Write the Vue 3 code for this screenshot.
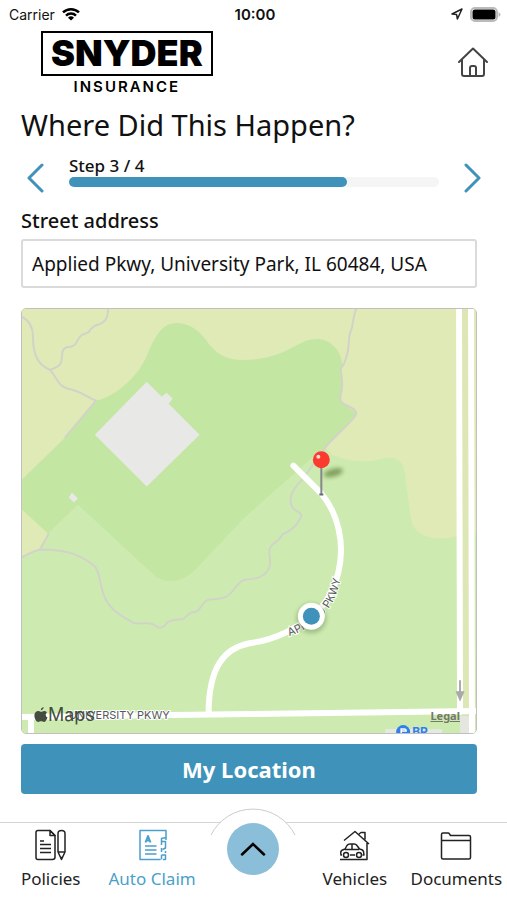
<template>
  <div class="app">
    <header class="status_bar">
      <div class="status_left">
        <span>Carrier</span>
        <svg class="wifi" viewBox="0 0 18 14" aria-hidden="true">
          <path d="M1 5.4a11.6 11.6 0 0 1 16 0" />
          <path d="M4 8.6a7.2 7.2 0 0 1 10 0" />
          <path class="wifi_dot" d="M9 13.6 6 10.8a4.3 4.3 0 0 1 6 0z" />
        </svg>
      </div>
      <time class="status_time">10:00</time>
      <div class="status_right">
        <svg class="locate" viewBox="0 0 12 12" aria-hidden="true">
          <path d="M1 6 11 1 6.4 11 5.6 6.6z" />
        </svg>
        <svg class="battery" viewBox="0 0 31 15" aria-hidden="true">
          <rect class="battery_case" x="1" y="1" width="26" height="13" rx="4" />
          <rect x="2.5" y="2.5" width="23" height="10" rx="2.5" />
          <path class="battery_tip" d="M28.5 5q2 1 2 2.5t-2 2.5z" />
        </svg>
      </div>
    </header>

    <div class="brand">
      <div class="logo">
        <div class="logo_name">SNYDER</div>
        <div class="logo_sub">INSURANCE</div>
      </div>
      <button class="home" aria-label="Home">
        <svg viewBox="0 0 30 30">
          <path d="M1 15 15 1.5 29 15" />
          <path d="M4 13v14q0 2 2 2h18q2 0 2-2V13" />
          <path d="M12 29v-8q0-2 2-2h2q2 0 2 2v8" />
        </svg>
      </button>
    </div>

    <main class="content">
      <h1>Where Did This Happen?</h1>

      <div class="stepper">
        <button class="arrow" aria-label="Previous step" @click="move_step(-1)">
          <svg viewBox="0 0 18 30"><path d="M16 2 3 15 16 28" /></svg>
        </button>
        <div class="step">
          <span>Step {{ step }} / {{ total }}</span>
          <div class="step_track">
            <div class="step_fill" :style="{ width: step_width }"></div>
          </div>
        </div>
        <button class="arrow" aria-label="Next step" @click="move_step(1)">
          <svg viewBox="0 0 18 30"><path d="M2 2 15 15 2 28" /></svg>
        </button>
      </div>

      <label class="field_label" for="address">Street address</label>
      <input id="address" v-model="address" class="field" type="text" />

      <div class="map">
        <svg class="map_canvas" viewBox="0 0 455 425">
          <defs>
            <filter id="soft" x="-50%" y="-50%" width="200%" height="200%">
              <feGaussianBlur stdDeviation="2" />
            </filter>
            <path
              id="pkwy_label"
              d="M268 328C282 323 297 314 306 302C315 290 319 277 322 255"
            />
          </defs>
          <rect width="455" height="425" fill="#cdebb0" />
          <!-- fields -->
          <path
            fill="#e0eab6"
            d="M0 0H455V226Q440 226 430 229Q412 232 401 226Q392 221 390 212L384 168Q383 152 374 150Q366 148 357 151Q335 156 311 146L304 139L150 100L0 171z"
          />
          <path fill="#e0eab6" d="M0 201 26 224 18 241 0 250z" />
          <!-- grove -->
          <path
            fill="#c3e6a3"
            d="M0 171 43 129 74 92C92 88 115 70 125 47C133 28 140 14 155 14C170 14 180 24 188 36C197 46 205 51 221 51C240 51 254 47 268 40C280 34 285 30 296 30C308 30 319 40 321 54L319 92 335 105 304 139 294 146 221 211 175 260C162 273 148 276 135 269L56 196 26 225 0 201z"
          />
          <!-- trails -->
          <g class="trail">
            <path d="M0 8C8 12 11 18 11 28C11 46 16 56 28 61C36 70 36 77 46 80C59 82 64 88 74 92L43 129" />
            <path d="M86 0Q87 12 78 15Q70 17 67 23Q64 25 60 26C54 30 56 38 47 38Q40 38 40 47C40 57 36 58 28 61" />
            <path
              d="M335 0C332 6 332 15 330 21C326 28 329 38 325 48Q323 56 319 60C321 68 322 78 319 88C317 98 334 96 335 105C332 113 312 128 304 139L281 171C271 180 267 188 270 197C272 204 281 202 280 208C275 218 270 222 261 226C258 233 250 234 248 241C247 250 251 253 247 261C243 268 236 271 224 271C214 273 213 286 203 289C196 292 190 290 185 292C178 296 180 304 171 304C166 304 165 311 159 311C153 312 149 311 145 315C140 321 137 320 133 317C128 313 122 316 113 315C108 313 105 310 99 307C88 300 82 290 80 280C77 269 77 261 72 257C58 246 45 241 18 241Q10 243 0 249"
            />
            <path d="M27 225 18 241" />
          </g>
          <!-- buildings -->
          <path fill="#e8e8e7" d="M125 73 140 88 145 84 151 90 147 95 178 126 125 178 73 126z" />
          <path fill="#e8e8e7" d="M50 184 56 190 52 194 47 189z" />
          <!-- roads -->
          <rect x="441" width="7" height="404" fill="#dde6b5" />
          <g class="road">
            <path d="M438 0 439 404" />
            <path d="M450 0 451 425" />
            <path d="M0 409 228 406 455 403" />
            <path d="M9 411V425" />
            <path d="M272 157 300 185C317 205 324 236 317 264C311 287 302 299 290 308C270 324 250 332 228 335C203 340 187 358 187 406" />
          </g>
          <rect x="439" y="408" width="9" height="17" fill="#e4e6df" />
          <path class="one_way" d="M439 372V386M436 384 439 391 442 384z" />
          <text class="road_name"><textPath href="#pkwy_label">APPLIED PKWY</textPath></text>
          <text class="road_name" x="148" y="411" text-anchor="end">UNIVERSITY PKWY</text>
          <!-- gas station -->
          <rect x="364" y="421" width="57" height="4" fill="#e6e8e2" />
          <circle cx="382" cy="424" r="7" fill="#2f80ed" />
          <path d="M380 428V421H383Q385 421 385 423H380" fill="none" stroke="#fff" stroke-width="1.5" />
          <text class="poi" x="391" y="428">BP</text>
          <!-- dropped pin -->
          <ellipse cx="312" cy="164" rx="10" ry="4" fill="#50702c" opacity="0.6" filter="url(#soft)" transform="rotate(-15 312 164)" />
          <path d="M300 156V186" stroke="#85888a" stroke-width="2" />
          <path d="M298 186H302" stroke="#686b72" stroke-width="2" />
          <circle cx="300" cy="151" r="8.5" fill="#fb3b30" />
          <circle cx="297" cy="148" r="2" fill="#ffd9d4" />
          <!-- current location -->
          <circle cx="290" cy="310" r="15" fill="#4d6b35" opacity="0.35" filter="url(#soft)" />
          <circle cx="290" cy="308" r="13.5" fill="#fff" />
          <circle cx="290" cy="308" r="8.5" fill="#3f93ba" />
        </svg>
        <div class="map_brand">
          <svg viewBox="0 0 14 16" aria-hidden="true">
            <path
              d="M9.6 0C9.7 1.6 8.4 3.3 6.8 3.3C6.6 1.8 8 .3 9.6 0zM12.9 5.5C11.1 6.7 11.3 9.6 13.5 10.6C13 12.2 11.6 14.9 10.2 15C9 15.1 8.6 14.3 7.2 14.3C5.8 14.3 5.3 15 4.2 15C2.5 15 .4 11.6 .4 8.5C.4 5.5 2.3 4 4.2 4C5.4 4 6.3 4.8 7.1 4.8C7.9 4.8 8.9 3.9 10.4 4C11.4 4 12.3 4.5 12.9 5.5z"
            />
          </svg>
          <span>Maps</span>
        </div>
        <a class="map_legal" href="#legal">Legal</a>
      </div>

      <button class="locate_btn">My Location</button>
    </main>

    <nav class="tabs">
      <a class="tab" href="#policies">
        <svg viewBox="0 0 32 32">
          <path d="M3 1.5H15L20 6.5V28Q20 30.500 17.500 30.500H3Q1 30.500 1 28.500V3.500Q1 1.500 3 1.500z" />
          <path d="M15 1.5V6.5H20z" />
          <path d="M5 12H9M5 15.5H16M5 19.5H16M5 23.5H16" />
          <path d="M23 4.5Q23 1.5 26.5 1.5T30 4.5V23L26.5 30.5 23 23z" />
          <path d="M23 23H30M25.5 28.5H27.5" />
        </svg>
        <span>Policies</span>
      </a>
      <a class="tab is_active" href="#claim">
        <svg viewBox="0 0 32 32">
          <path d="M24.5 30.5H4V1.5H30V8.500L25.500 9.500V16M25.500 19V23M25.500 26V30.500" />
          <path d="M30 8.500V11M25.500 12.500H29.500V19L26.500 20.500M29.500 22V24M25.500 26H29.500V30.500H27" />
          <path d="M9 17H20.500M9 21H20.500M9 25H20.500" />
          <path stroke-width="2" d="M9.500 13.500 12 7 14.500 13.500M10.500 11.500H13.500" />
        </svg>
        <span>Auto Claim</span>
      </a>
      <div class="tab_center">
        <svg class="tab_arc" viewBox="0 0 86 28" aria-hidden="true">
          <path class="arc_mask" d="M1 27A47 47 0 0 1 85 27z" />
          <path class="arc_line" d="M1 27A47 47 0 0 1 85 27" />
        </svg>
        <button class="tab_more" aria-label="More">
          <svg viewBox="0 0 26 14"><path d="M2 12.5 13 2 24 12.5" /></svg>
        </button>
      </div>
      <a class="tab" href="#vehicles">
        <svg viewBox="0 0 32 32">
          <path d="M5 11.5 16 2.5 30 15M20 5 22 3.5H26V10.5M28 14V30.5H1" />
          <path d="M3 26H2Q1 22 3.5 21L6 20 8 16.5Q9 15 11 15H15Q17 15 18 16.5L20.5 20Q24 20.5 24.5 22.5L25 26H23.5M11 26H16M6 20.5H20M13 15V20" />
          <circle cx="7" cy="26" r="2.5" />
          <circle cx="20" cy="26" r="2.5" />
        </svg>
        <span>Vehicles</span>
      </a>
      <a class="tab" href="#documents">
        <svg viewBox="0 0 32 32">
          <path d="M1.5 5.5Q1.5 4 3 4H8Q9 4 9.5 5L10.5 6.5H29Q30.500 6.500 30.500 8V28.500Q30.500 30 29 30H3Q1.500 30 1.500 28.500zM1.500 11.500H30.500" />
        </svg>
        <span>Documents</span>
      </a>
    </nav>
  </div>
</template>

<script setup>
import { ref, computed } from 'vue'

const total = 4
const step = ref(3)
const address = ref('Applied Pkwy, University Park, IL 60484, USA')

const step_width = computed(() => `${(step.value / total) * 100}%`)

function move_step(diff) {
  step.value = Math.min(total, Math.max(1, step.value + diff))
}
</script>

<style>
body {
  margin: 0;
  background: #fff;
}
</style>

<style scoped>
.app {
  display: flex;
  flex-direction: column;
  min-height: 100vh;
  font-family: 'Noto Sans', sans-serif;
  color: #111;
}
button {
  padding: 0;
  border: none;
  background: none;
  font-family: inherit;
  cursor: pointer;
}
svg {
  display: block;
  fill: none;
}

/* status bar */
.status_bar {
  display: grid;
  grid-template-columns: 1fr auto 1fr;
  align-items: center;
  height: 28px;
  padding: 0 6px 0 9px;
  font-family: Inter, sans-serif;
  font-size: 14px;
}
.status_left,
.status_right {
  display: flex;
  align-items: center;
  gap: 7px;
}
.status_right {
  justify-content: flex-end;
}
.status_time {
  font-size: 15px;
  font-weight: 600;
}
.wifi {
  width: 18px;
  height: 14px;
  stroke: #000;
  stroke-width: 2.5;
}
.wifi_dot {
  fill: #000;
  stroke: none;
}
.locate {
  width: 12px;
  height: 12px;
  stroke: #222;
  stroke-width: 1.5;
  stroke-linejoin: round;
}
.battery {
  width: 31px;
  height: 15px;
  fill: #000;
}
.battery_case {
  fill: #fff;
  stroke: #bbb;
  stroke-width: 2;
}
.battery_tip {
  fill: #bbb;
}

/* logo row */
.brand {
  display: flex;
  justify-content: space-between;
  padding: 3px 19px 0 41px;
}
.logo {
  font-family: Inter, sans-serif;
  color: #000;
  text-align: center;
}
.logo_name {
  padding: 0 8px;
  border: 2px solid #000;
  font-size: 36px;
  font-weight: 900;
  line-height: 41px;
}
.logo_sub {
  font-size: 15px;
  font-weight: 600;
  line-height: 22px;
  letter-spacing: 2px;
}
.home {
  align-self: flex-start;
  margin-top: 16px;
}
.home svg {
  width: 30px;
  height: 30px;
  stroke: #444;
  stroke-width: 2;
  stroke-linejoin: round;
  stroke-linecap: round;
}

/* form */
.content {
  display: flex;
  flex-direction: column;
  padding: 0 30px 0 21px;
}
h1 {
  margin: 0;
  font-size: 29px;
  font-weight: 400;
  line-height: 54px;
}
.stepper {
  display: flex;
  align-items: flex-end;
  gap: 25px;
  margin: 3px -5px 0 5px;
}
.arrow svg {
  width: 18px;
  height: 30px;
  stroke: #3f93ba;
  stroke-width: 3;
  stroke-linecap: round;
  stroke-linejoin: round;
}
.step {
  flex: 1;
  padding-bottom: 6px;
  font-size: 17px;
  font-weight: 500;
  line-height: 22px;
}
.step_track {
  height: 10px;
  border-radius: 5px;
  background: #f5f5f6;
}
.step_fill {
  height: 100%;
  border-radius: 5px;
  background: #3f93ba;
}
.field_label {
  margin-top: 12px;
  font-size: 20px;
  font-weight: 500;
  line-height: 32px;
}
.field {
  box-sizing: border-box;
  width: 100%;
  height: 49px;
  margin-top: 2px;
  padding: 0 9px;
  border: 2px solid #dadada;
  border-radius: 3px;
  background: #fff;
  color: #111;
  font-family: inherit;
  font-size: 19px;
}

/* map */
.map {
  position: relative;
  margin-top: 20px;
  border: 1px solid #c0c0be;
  border-radius: 5px;
  overflow: hidden;
}
.map_canvas {
  width: 100%;
  height: auto;
}
.trail {
  stroke: #d2d3c8;
  stroke-width: 2;
}
.road {
  stroke: #fff;
  stroke-width: 6;
  stroke-linecap: round;
}
.one_way {
  fill: #a9a9a9;
  stroke: #a9a9a9;
  stroke-width: 2;
}
.road_name {
  fill: #55595a;
  stroke: #fff;
  stroke-width: 2px;
  paint-order: stroke;
  font-family: Inter, sans-serif;
  font-size: 11px;
}
.poi {
  fill: #2f80ed;
  font-family: Inter, sans-serif;
  font-size: 12px;
  font-weight: 700;
}
.map_brand {
  position: absolute;
  left: 12px;
  bottom: 7px;
  display: flex;
  align-items: center;
  color: #454d40;
  font-family: Inter, sans-serif;
  font-size: 18px;
  line-height: 22px;
}
.map_brand svg {
  width: 14px;
  height: 16px;
  fill: #454d40;
}
.map_legal {
  position: absolute;
  right: 16px;
  bottom: 9px;
  color: #74796c;
  font-size: 11px;
  font-weight: 700;
  line-height: 16px;
}

.locate_btn {
  height: 50px;
  margin-top: 10px;
  border-radius: 4px;
  background: #3f93ba;
  color: #fff;
  font-size: 22px;
  font-weight: 700;
}

/* bottom tabs */
.tabs {
  display: grid;
  grid-template-columns: repeat(5, 1fr);
  height: 77px;
  margin-top: auto;
  border-top: 1px solid #d4d4d4;
}
.tab {
  display: flex;
  flex-direction: column;
  align-items: center;
  padding-top: 6px;
  color: #222;
  font-size: 17px;
  line-height: 24px;
  text-decoration: none;
  white-space: nowrap;
}
.tab svg {
  width: 32px;
  height: 32px;
  margin-bottom: 6px;
  stroke: currentColor;
  stroke-width: 1.5;
  stroke-linejoin: round;
}
.tab.is_active {
  color: #4a9fcb;
}
.tab_center {
  position: relative;
  display: flex;
  justify-content: center;
  align-items: flex-start;
}
.tab_arc {
  position: absolute;
  top: -15px;
  width: 86px;
  height: 28px;
}
.arc_mask {
  fill: #fff;
}
.arc_line {
  stroke: #ccc;
}
.tab_more {
  position: relative;
  display: grid;
  place-items: center;
  width: 52px;
  height: 52px;
  border-radius: 50%;
  background: #8bbed8;
}
.tab_more svg {
  width: 26px;
  height: 14px;
  stroke: #000;
  stroke-width: 2.5;
  stroke-linecap: round;
}
</style>
